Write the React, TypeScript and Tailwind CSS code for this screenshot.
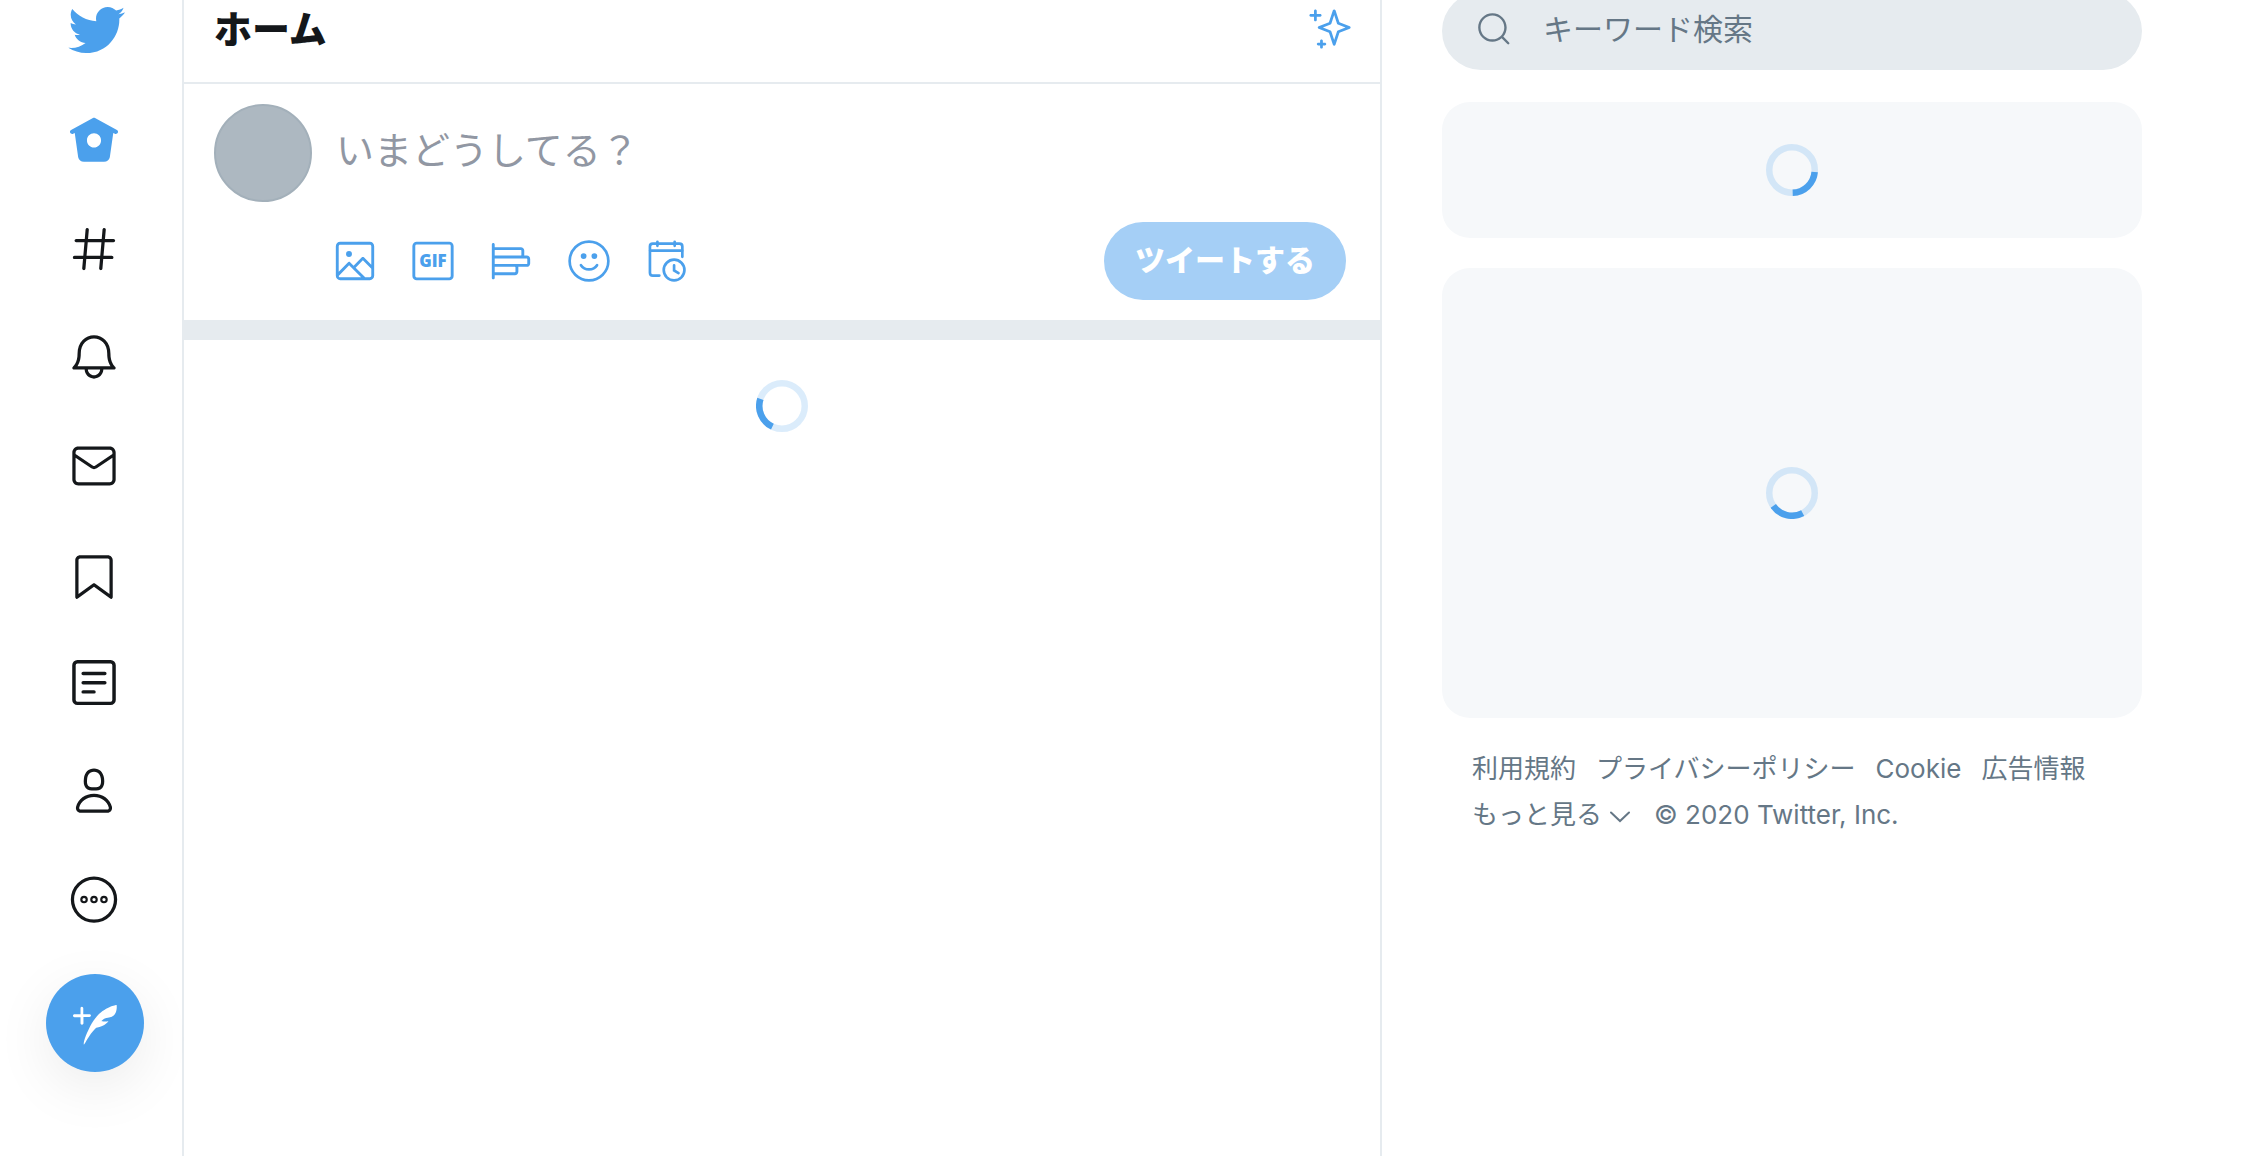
import type { ReactNode } from 'react';
import clsx from 'clsx';

interface IconProps {
  className?: string;
  children: ReactNode;
}

function Icon({ className, children }: IconProps) {
  return (
    <svg viewBox="0 0 24 24" fill="currentColor" aria-hidden="true" className={clsx('shrink-0', className)}>
      {children}
    </svg>
  );
}

const navItems = [
  {
    label: 'ホーム',
    active: true,
    icon: (
      <path d="M22.58 7.35L12.475 1.897c-.297-.16-.654-.16-.95 0L1.425 7.35c-.486.264-.667.87-.405 1.356.18.335.525.525.88.525.16 0 .324-.038.475-.12l.734-.396 1.59 11.25c.216 1.214 1.31 2.062 2.66 2.062h9.282c1.35 0 2.444-.848 2.662-2.088l1.588-11.225.737.398c.485.263 1.092.082 1.354-.404.263-.486.08-1.093-.404-1.355zM12 15.435c-1.795 0-3.25-1.455-3.25-3.25s1.455-3.25 3.25-3.25 3.25 1.455 3.25 3.25-1.455 3.25-3.25 3.25z" />
    ),
  },
  {
    label: '話題を検索',
    icon: (
      <path d="M21 7.337h-3.93l.372-4.272c.036-.412-.27-.775-.682-.812-.417-.03-.776.27-.812.683l-.383 4.4h-6.32l.37-4.27c.037-.413-.27-.776-.68-.813-.42-.03-.777.27-.813.683l-.382 4.4H3.782c-.414 0-.75.337-.75.75s.336.75.75.75H7.61l-.55 6.327H3c-.414 0-.75.336-.75.75s.336.75.75.75h3.93l-.372 4.272c-.036.412.27.775.682.812l.066.003c.385 0 .712-.295.746-.686l.383-4.4h6.32l-.37 4.27c-.036.413.27.776.682.813l.066.003c.385 0 .712-.295.746-.686l.382-4.4h3.957c.413 0 .75-.337.75-.75s-.337-.75-.75-.75H16.39l.55-6.327H21c.414 0 .75-.336.75-.75s-.336-.75-.75-.75zm-6.115 7.826h-6.32l.55-6.326h6.32l-.55 6.326z" />
    ),
  },
  {
    label: '通知',
    icon: (
      <path d="M21.697 16.468c-.02-.016-2.14-1.64-2.103-6.03.02-2.532-.812-4.782-2.347-6.335C15.872 2.71 14.01 1.94 12.005 1.93h-.013c-2.004.01-3.866.78-5.242 2.174-1.534 1.553-2.368 3.802-2.346 6.334.037 4.33-2.02 5.967-2.102 6.03-.26.193-.366.53-.265.838.102.308.39.515.712.515h4.92c.102 2.31 1.997 4.16 4.33 4.16s4.226-1.85 4.327-4.16h4.922c.322 0 .61-.206.71-.514.103-.307-.003-.645-.263-.838zM12 20.478c-1.505 0-2.73-1.177-2.828-2.658h5.656c-.1 1.48-1.323 2.66-2.828 2.66zM4.38 16.32c.74-1.132 1.548-3.028 1.524-5.896-.018-2.16.644-3.982 1.913-5.267C8.91 4.05 10.397 3.437 12 3.43c1.603.008 3.087.62 4.18 1.728 1.27 1.285 1.933 3.106 1.915 5.267-.024 2.868.785 4.765 1.525 5.896H4.38z" />
    ),
  },
  {
    label: 'メッセージ',
    icon: (
      <path d="M19.25 3.018H4.75C3.233 3.018 2 4.252 2 5.77v12.495c0 1.518 1.233 2.753 2.75 2.753h14.5c1.517 0 2.75-1.235 2.75-2.753V5.77c0-1.518-1.233-2.752-2.75-2.752zm-14.5 1.5h14.5c.69 0 1.25.56 1.25 1.25v.714l-8.05 5.367c-.273.18-.626.182-.9-.002L3.5 6.482v-.714c0-.69.56-1.25 1.25-1.25zm14.5 14.998H4.75c-.69 0-1.25-.56-1.25-1.25V8.24l7.24 4.83c.383.256.822.384 1.26.384.44 0 .877-.128 1.26-.383l7.24-4.83v10.022c0 .69-.56 1.25-1.25 1.25z" />
    ),
  },
  {
    label: 'ブックマーク',
    icon: (
      <path d="M19.9 23.5c-.157 0-.312-.05-.442-.144L12 17.928l-7.458 5.43c-.228.164-.53.19-.782.06-.25-.127-.41-.385-.41-.667V5.6c0-1.24 1.01-2.25 2.25-2.25h12.798c1.24 0 2.25 1.01 2.25 2.25v17.15c0 .282-.158.54-.41.668-.106.055-.223.082-.34.082zM12 16.25c.155 0 .31.048.44.144l6.71 4.883V5.6c0-.412-.337-.75-.75-.75H5.6c-.413 0-.75.338-.75.75v15.677l6.71-4.883c.13-.096.285-.144.44-.144z" />
    ),
  },
  {
    label: 'リスト',
    icon: (
      <g fill="none" stroke="currentColor" strokeWidth="1.6" strokeLinecap="round">
        <rect x="2.75" y="2.2" width="18.5" height="19.2" rx="1.6" />
        <path d="M7 7.6h10M7 11.9h10M7 16.1h5" />
      </g>
    ),
  },
  {
    label: 'プロフィール',
    icon: (
      <path d="M12 11.816c1.355 0 2.872-.15 3.84-1.256.814-.93 1.078-2.368.806-4.392-.38-2.825-2.117-4.512-4.646-4.512S7.734 3.343 7.354 6.17c-.272 2.022-.008 3.46.806 4.39.968 1.107 2.485 1.256 3.84 1.256zM8.84 6.368c.162-1.2.787-3.212 3.16-3.212s2.998 2.013 3.16 3.212c.207 1.55.057 2.627-.45 3.205-.455.52-1.266.743-2.71.743s-2.255-.223-2.71-.743c-.507-.578-.657-1.656-.45-3.205zm11.44 12.868c-.877-3.526-4.282-5.99-8.28-5.99s-7.403 2.464-8.28 5.99c-.172.692-.028 1.4.395 1.94.408.52 1.04.82 1.733.82h12.304c.693 0 1.325-.3 1.733-.82.424-.54.567-1.247.394-1.94zm-1.576 1.016c-.126.16-.316.246-.552.246H5.848c-.235 0-.426-.085-.552-.246-.137-.174-.18-.412-.12-.654.71-2.855 3.517-4.85 6.824-4.85s6.114 1.994 6.824 4.85c.06.242.017.48-.12.654z" />
    ),
  },
  {
    label: 'もっと見る',
    icon: (
      <g fill="none" stroke="currentColor">
        <circle cx="12" cy="11.8" r="9.95" strokeWidth="1.5" />
        <g strokeWidth="1">
          <circle cx="7.4" cy="11.8" r="1.25" />
          <circle cx="12" cy="11.8" r="1.25" />
          <circle cx="16.6" cy="11.8" r="1.25" />
        </g>
      </g>
    ),
  },
];

const composeTools = [
  {
    label: '画像',
    icon: (
      <>
        <path d="M19.75 2H4.25C3.01 2 2 3.01 2 4.25v15.5C2 20.99 3.01 22 4.25 22h15.5c1.24 0 2.25-1.01 2.25-2.25V4.25C22 3.01 20.99 2 19.75 2zM4.25 3.5h15.5c.413 0 .75.337.75.75v9.676l-3.858-3.858c-.14-.14-.33-.22-.53-.22h-.003c-.2 0-.393.08-.532.224l-4.317 4.384-1.813-1.806c-.14-.14-.33-.22-.53-.22-.193-.03-.395.08-.535.227L3.5 17.642V4.25c0-.413.337-.75.75-.75zm-.744 16.28l5.418-5.534 6.282 6.254H4.25c-.402 0-.727-.322-.744-.72zm16.244.72h-2.42l-5.007-4.987 3.792-3.85 4.385 4.384v3.703c0 .413-.337.75-.75.75z" />
        <circle cx="8.868" cy="8.309" r="1.542" />
      </>
    ),
  },
  {
    label: 'GIF画像',
    icon: (
      <>
        <rect x="2" y="2.7" width="20" height="18.6" rx="1.5" fill="none" stroke="currentColor" strokeWidth="1.5" />
        <text x="12" y="15.2" textAnchor="middle" fontSize="8.8" fontWeight="800" fontFamily="Open Sans, sans-serif">
          GIF
        </text>
      </>
    ),
  },
  {
    label: '投票',
    icon: (
      <path d="M20.222 9.16h-1.334c.015-.09.028-.182.028-.277V6.57c0-.98-.797-1.777-1.778-1.777H3.5V3.358c0-.414-.336-.75-.75-.75s-.75.336-.75.75V20.83c0 .415.336.75.75.75s.75-.335.75-.75v-1.434h10.556c.98 0 1.778-.797 1.778-1.777v-2.313c0-.095-.014-.187-.028-.278h4.417c.98 0 1.778-.798 1.778-1.778v-2.31c0-.983-.797-1.78-1.778-1.78zM17.14 6.293c.152 0 .277.124.277.277v2.31c0 .154-.125.28-.278.28H3.5V6.29h13.64zm-2.807 9.014v2.312c0 .153-.125.277-.278.277H3.5v-2.868h10.556c.153 0 .277.126.277.28zM20.5 13.25c0 .153-.125.277-.278.277H3.5V10.66h16.722c.153 0 .278.124.278.277v2.313z" />
    ),
  },
  {
    label: '絵文字',
    icon: (
      <>
        <g fill="none" stroke="currentColor" strokeWidth="1.4" strokeLinecap="round">
          <circle cx="12" cy="12" r="10.1" />
          <path d="M7.8 14.2c.9 1.4 2.4 2.2 4.2 2.2s3.3-.8 4.2-2.2" />
        </g>
        <circle cx="9.2" cy="9.4" r="1.5" />
        <circle cx="14.8" cy="9.4" r="1.5" />
      </>
    ),
  },
  {
    label: '予約設定',
    icon: (
      <g fill="none" stroke="currentColor" strokeWidth="1.4" strokeLinecap="round">
        <path d="M8 19.6H4.6c-.9 0-1.5-.6-1.5-1.5V4.4c0-.9.6-1.5 1.5-1.5h13.9c.9 0 1.5.6 1.5 1.5v5.4" />
        <path d="M3.2 6.6h16.7M7 2v2.1M16 2v2.1" />
        <circle cx="15.7" cy="16.7" r="5.4" />
        <path d="M15.7 14.2v2.7l2.3 1.4" />
      </g>
    ),
  },
];

const footerLinks = ['利用規約', 'プライバシーポリシー', 'Cookie', '広告情報'];

function Spinner({ angle }: { angle: number }) {
  return (
    <svg viewBox="0 0 52 52" className="size-[52px]" role="img" aria-label="読み込み中">
      <g fill="none" stroke="#4ba0ec" strokeWidth="6.5">
        <circle cx="26" cy="26" r="22.75" opacity="0.2" />
        <circle
          cx="26"
          cy="26"
          r="22.75"
          pathLength="360"
          strokeDasharray="83 277"
          transform={`rotate(${angle} 26 26)`}
        />
      </g>
    </svg>
  );
}

function Sidebar() {
  return (
    <header className="flex w-[184px] shrink-0 flex-col border-r-2 border-[#e6ebef] pl-1.5">
      <a href="#" aria-label="Twitter" className="flex h-[86px] justify-center pl-1 text-[#4ba0ec]">
        <Icon className="size-[60px]">
          <path d="M23.643 4.937c-.835.37-1.732.62-2.675.733.962-.576 1.7-1.49 2.048-2.578-.9.534-1.897.922-2.958 1.13-.85-.904-2.06-1.47-3.4-1.47-2.572 0-4.658 2.086-4.658 4.66 0 .364.042.718.12 1.06-3.873-.195-7.304-2.05-9.602-4.868-.4.69-.63 1.49-.63 2.342 0 1.616.823 3.043 2.072 3.878-.764-.025-1.482-.234-2.11-.583v.06c0 2.257 1.605 4.14 3.737 4.568-.392.106-.803.162-1.227.162-.3 0-.593-.028-.877-.082.593 1.85 2.313 3.198 4.352 3.234-1.595 1.25-3.604 1.995-5.786 1.995-.376 0-.747-.022-1.112-.065 2.062 1.323 4.51 2.093 7.14 2.093 8.57 0 13.255-7.098 13.255-13.254 0-.2-.005-.402-.014-.602.91-.658 1.7-1.477 2.323-2.41z" />
        </Icon>
      </a>
      <nav className="grid h-[868px] auto-rows-fr">
        {navItems.map((item) => (
          <a
            key={item.label}
            href="#"
            aria-label={item.label}
            className={clsx('flex items-center justify-center', item.active ? 'text-[#4ba0ec]' : 'text-[#14171a]')}
          >
            <Icon className="size-[52px]">{item.icon}</Icon>
          </a>
        ))}
      </nav>
      <div className="flex justify-center pt-5 pl-0.5">
        <button
          type="button"
          aria-label="ツイートする"
          className="flex size-[98px] items-center justify-center rounded-full bg-[#4ba0ec] text-white shadow-[0_16px_56px_rgba(0,0,0,0.08)]"
        >
          <Icon className="size-[44px]">
            <path d="M8.8 7.2H5.6V3.9c0-.4-.3-.8-.8-.8s-.7.4-.7.8v3.3H.8c-.4 0-.8.3-.8.8s.3.8.8.8h3.3v3.3c0 .4.3.8.8.8s.8-.3.8-.8V8.7H9c.4 0 .8-.3.8-.8s-.5-.7-1-.7zm15-4.9v-.1h-.1c-.1 0-9.2 1.2-14.4 11.7-3.8 7.6-3.6 9.9-3.3 9.9.3.1 3.4-6.5 6.7-9.2 5.2-1.1 6.6-3.6 6.6-3.6s-1.5.2-2.1.2c-.8 0-1.4-.2-1.7-.3 1.3-1.2 2.4-1.5 3.5-1.7.9-.2 1.8-.4 3-1.2 2.2-1.6 1.9-5.5 1.8-5.7z" />
          </Icon>
        </button>
      </div>
    </header>
  );
}

function Composer() {
  return (
    <form className="flex gap-6 border-b-[20px] border-[#e6ebef] px-[30px] py-5" onSubmit={(e) => e.preventDefault()}>
      <div className="size-[98px] shrink-0 rounded-full border-2 border-[#a3b0ba] bg-[#adb8c1]" />
      <div className="flex-1">
        <textarea
          rows={1}
          aria-label="ツイート本文"
          placeholder="いまどうしてる？"
          className="block h-[96px] w-full resize-none py-[18px] text-[38px] leading-[56px] outline-none placeholder:text-[#9197a3]"
        />
        <div className="flex items-center justify-between pt-[22px] pr-1">
          <div className="flex gap-8 text-[#4ba0ec]">
            {composeTools.map((tool) => (
              <button key={tool.label} type="button" aria-label={tool.label} className="-ml-1 mr-1">
                <Icon className="size-[46px]">{tool.icon}</Icon>
              </button>
            ))}
          </div>
          <button
            type="submit"
            className="h-[78px] rounded-full bg-[#a5cff6] px-[31px] pb-0.5 text-[30px] font-extrabold text-white"
          >
            ツイートする
          </button>
        </div>
      </div>
    </form>
  );
}

function Timeline() {
  return (
    <main className="min-w-0 flex-1 border-r-2 border-[#e6ebef]">
      <div className="flex h-[84px] items-start justify-between border-b-2 border-[#e6ebef] pr-7 pl-[30px]">
        <h1 className="text-[38px] leading-[58px] font-extrabold text-[#14171a]">ホーム</h1>
        <button type="button" aria-label="トップツイート" className="pt-[7px] text-[#4ba0ec]">
          <Icon className="size-[44px]">
            <path d="M22.772 10.506l-5.618-2.192-2.16-6.5c-.102-.307-.39-.514-.712-.514s-.61.207-.712.513l-2.16 6.5-5.62 2.192c-.287.112-.477.39-.477.7s.19.585.478.698l5.62 2.192 2.16 6.5c.102.306.39.513.712.513s.61-.207.712-.513l2.16-6.5 5.62-2.192c.287-.112.477-.39.477-.7s-.19-.585-.478-.697zm-6.49 2.32c-.208.08-.37.25-.44.46l-1.56 4.695-1.56-4.693c-.07-.21-.23-.38-.438-.462l-4.155-1.62 4.154-1.622c.208-.08.37-.25.44-.462l1.56-4.693 1.56 4.694c.07.212.23.382.438.463l4.155 1.62-4.155 1.622zM6.663 3.812h-1.88V2.05c0-.414-.337-.75-.75-.75s-.75.336-.75.75v1.762H1.5c-.414 0-.75.336-.75.75s.336.75.75.75h1.782v1.762c0 .414.336.75.75.75s.75-.336.75-.75V5.312h1.88c.415 0 .75-.336.75-.75s-.335-.75-.75-.75zm2.535 15.622h-1.1v-1.016c0-.414-.335-.75-.75-.75s-.75.336-.75.75v1.016H5.57c-.414 0-.75.336-.75.75s.336.75.75.75H6.6v1.016c0 .414.335.75.75.75s.75-.336.75-.75v-1.016h1.098c.414 0 .75-.336.75-.75s-.336-.75-.75-.75z" />
          </Icon>
        </button>
      </div>
      <Composer />
      <div className="flex justify-center pt-10">
        <Spinner angle={115} />
      </div>
    </main>
  );
}

function SideColumn() {
  return (
    <aside className="flex w-[864px] shrink-0 flex-col pr-[104px] pl-[60px]">
      <label className="-mt-2 flex h-[78px] items-center gap-[30px] rounded-full bg-[#e6ebef] px-[33px] pb-1 text-[#657786]">
        <Icon className="size-[38px]">
          <path d="M21.53 20.47l-3.66-3.66C19.195 15.24 20 13.214 20 11c0-4.97-4.03-9-9-9s-9 4.03-9 9 4.03 9 9 9c2.215 0 4.24-.804 5.808-2.13l3.66 3.66c.147.146.34.22.53.22s.385-.073.53-.22c.295-.293.295-.767.002-1.06zM3.5 11c0-4.135 3.365-7.5 7.5-7.5s7.5 3.365 7.5 7.5-3.365 7.5-7.5 7.5-7.5-3.365-7.5-7.5z" />
        </Icon>
        <input
          type="search"
          aria-label="キーワード検索"
          placeholder="キーワード検索"
          className="min-w-0 flex-1 bg-transparent text-[30px] outline-none placeholder:text-[#657786]"
        />
      </label>
      <section className="mt-8 flex h-[136px] items-center justify-center rounded-[28px] bg-[#f6f8fa]">
        <Spinner angle={5} />
      </section>
      <section className="mt-[30px] flex h-[450px] items-center justify-center rounded-[28px] bg-[#f6f8fa]">
        <Spinner angle={62} />
      </section>
      <nav className="flex flex-wrap gap-x-5 px-[30px] pt-7 text-[26px] leading-[46px] text-[#657786]">
        {footerLinks.map((link) => (
          <a key={link} href="#">
            {link}
          </a>
        ))}
        <button type="button" className="flex items-center gap-2">
          もっと見る
          <svg viewBox="0 0 20 12" fill="none" stroke="currentColor" strokeWidth="2" className="mt-1 w-5" aria-hidden="true">
            <path d="M1 1.5l9 8.5 9-8.5" strokeLinecap="round" />
          </svg>
        </button>
        <span className="pl-1">© 2020 Twitter, Inc.</span>
      </nav>
    </aside>
  );
}

export default function App() {
  return (
    <div className="flex min-h-screen bg-white font-[Inter,'Noto_Sans_CJK_JP',sans-serif]">
      <Sidebar />
      <Timeline />
      <SideColumn />
    </div>
  );
}
